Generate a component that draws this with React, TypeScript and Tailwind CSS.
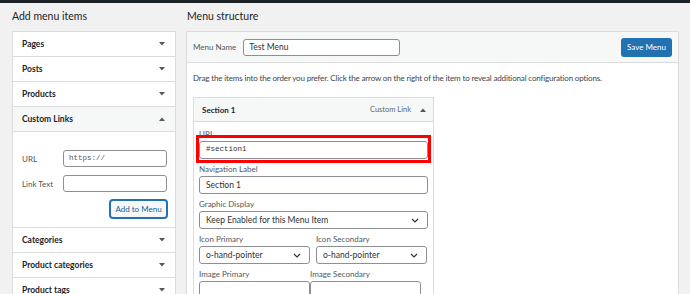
import React from "react";

const font = { fontFamily: 'Lato, "Liberation Sans", Arial, sans-serif' };
const mono = { fontFamily: '"Liberation Mono", "DejaVu Sans Mono", monospace' };

function Tri({ up }: { up?: boolean }) {
  return (
    <svg width="6" height="4" viewBox="0 0 6 4" className="shrink-0">
      {up ? <path d="M0 4 L3 0.5 L6 4 Z" fill="#50575e" /> : <path d="M0 0 L6 0 L3 3.5 Z" fill="#50575e" />}
    </svg>
  );
}

function Chevron() {
  return (
    <svg width="8" height="5" viewBox="0 0 8 5" className="shrink-0">
      <path d="M1 1 L4 4 L7 1" stroke="#2c3338" strokeWidth="1.2" fill="none" />
    </svg>
  );
}

function AccRow({ label, up, gray }: { label: string; up?: boolean; gray?: boolean }) {
  return (
    <div
      className={`flex h-[25px] items-center justify-between border-b border-[#dcdcde] pl-[9px] pr-[10px] text-[8.5px] font-bold text-[#1d2327] ${
        gray ? "bg-[#f6f7f7]" : "bg-white"
      }`}
    >
      <span>{label}</span>
      <Tri up={up} />
    </div>
  );
}

function Select({ value, className }: { value: string; className: string }) {
  return (
    <div
      className={`flex h-[18px] items-center justify-between rounded-[3px] border border-[#8c8f94] bg-white pl-[6px] pr-[8px] text-[8.5px] text-[#2c3338] ${className}`}
    >
      <span>{value}</span>
      <Chevron />
    </div>
  );
}

function Label({ children }: { children: React.ReactNode }) {
  return <div className="h-[12px] text-[8px] leading-[12px] text-[#50575e]">{children}</div>;
}

export default function App() {
  return (
    <div className="h-[294px] w-[690px] overflow-hidden bg-[#f1f1f1]" style={font}>
      <div className="h-[3px] bg-[#1d2327]" />
      <div className="flex">
        {/* left column */}
        <div className="ml-[12px] w-[164px]">
          <div className="flex h-[28px] items-center text-[10.5px] text-[#1d2327]">Add menu items</div>
          <div className="border border-[#dcdcde] bg-white">
            <AccRow label="Pages" />
            <AccRow label="Posts" />
            <AccRow label="Products" />
            <AccRow label="Custom Links" up gray />
            <div className="h-[96px] border-b border-[#dcdcde] pt-[18px] pl-[9px] pr-[8px]">
              <div className="flex items-center justify-between">
                <span className="text-[8px] text-[#50575e]">URL</span>
                <div className="flex h-[17px] w-[104px] items-center rounded-[3px] border border-[#8c8f94] pl-[5px] text-[7.5px] text-[#50575e]" style={mono}>
                  https://
                </div>
              </div>
              <div className="mt-[8px] flex items-center justify-between">
                <span className="whitespace-nowrap text-[8px] text-[#50575e]">Link Text</span>
                <div className="h-[17px] w-[104px] rounded-[3px] border border-[#8c8f94]" />
              </div>
              <div className="mt-[8px] flex justify-end">
                <div className="flex h-[18px] w-[57px] items-center justify-center whitespace-nowrap rounded-[3px] border border-[#2271b1] bg-[#f6f7f7] text-[8px] text-[#1d5f94] shadow-[0_0_0_1px_#2271b1]">
                  Add to Menu
                </div>
              </div>
            </div>
            <AccRow label="Categories" />
            <AccRow label="Product categories" />
            <AccRow label="Product tags" />
          </div>
        </div>

        {/* right column */}
        <div className="ml-[10px] w-[493px]">
          <div className="flex h-[28px] items-center pl-[1px] text-[10.5px] text-[#1d2327]">Menu structure</div>
          <div className="h-[270px] border border-[#dcdcde] bg-white">
            <div className="flex h-[31px] items-center justify-between border-b border-[#dcdcde] bg-[#f6f7f7] pl-[6px] pr-[6px]">
              <div className="flex items-center">
                <span className="text-[8px] text-[#50575e]">Menu Name</span>
                <div className="ml-[7px] flex h-[17px] w-[157px] items-center rounded-[3px] border border-[#8c8f94] bg-white pl-[5px] text-[8.5px] text-[#2c3338]">
                  Test Menu
                </div>
              </div>
              <div className="flex h-[19px] w-[51px] items-center justify-center whitespace-nowrap rounded-[3px] bg-[#2271b1] text-[8px] text-white">
                Save Menu
              </div>
            </div>
            <div className="px-[6px]">
              <div className="mt-[9px] whitespace-nowrap text-[8px] leading-[12px] tracking-[-0.15px] text-[#3c434a]">
                Drag the items into the order you prefer. Click the arrow on the right of the item to reveal additional configuration options.
              </div>
              <div className="mt-[13px] w-[241px] border border-[#dcdcde]">
                <div className="flex h-[24px] items-center justify-between border-b border-[#dcdcde] bg-[#f6f7f7] pl-[8px] pr-[7px]">
                  <span className="text-[8px] font-bold text-[#1d2327]">Section 1</span>
                  <div className="flex items-center gap-[9px]">
                    <span className="text-[7.5px] text-[#646970]">Custom Link</span>
                    <Tri up />
                  </div>
                </div>
                <div className="px-[5px] pt-[6px]">
                  <div className="relative">
                    <Label>URL</Label>
                    <div className="absolute left-[-3px] right-[-3px] top-[7px] h-[28px] border-[3px] border-[#ff0000]" />
                    <div className="relative mt-[1px] flex h-[18px] items-center rounded-[3px] border border-[#8c8f94] bg-white pl-[6px] text-[7.5px] text-[#2c3338]" style={mono}>
                      #section1
                    </div>
                  </div>
                  <div className="mt-[4px]">
                    <Label>Navigation Label</Label>
                    <div className="mt-[1px] flex h-[18px] items-center rounded-[3px] border border-[#8c8f94] bg-white pl-[6px] text-[8.5px] text-[#2c3338]">
                      Section 1
                    </div>
                  </div>
                  <div className="mt-[4px]">
                    <Label>Graphic Display</Label>
                    <Select value="Keep Enabled for this Menu Item" className="mt-[1px] w-full" />
                  </div>
                  <div className="mt-[4px] flex gap-[6px]">
                    <div className="w-[111px]">
                      <Label>Icon Primary</Label>
                      <Select value="o-hand-pointer" className="mt-[1px] w-full" />
                    </div>
                    <div className="w-[111px]">
                      <Label>Icon Secondary</Label>
                      <Select value="o-hand-pointer" className="mt-[1px] w-full" />
                    </div>
                  </div>
                  <div className="mt-[4px] flex">
                    <div className="w-[111px]">
                      <Label>Image Primary</Label>
                      <div className="mt-[1px] h-[30px] rounded-[3px] border border-[#8c8f94] bg-white" />
                    </div>
                    <div className="w-[111px]">
                      <Label>Image Secondary</Label>
                      <div className="mt-[1px] h-[30px] rounded-[3px] border border-[#8c8f94] bg-white" />
                    </div>
                  </div>
                </div>
              </div>
            </div>
          </div>
        </div>
      </div>
    </div>
  );
}
